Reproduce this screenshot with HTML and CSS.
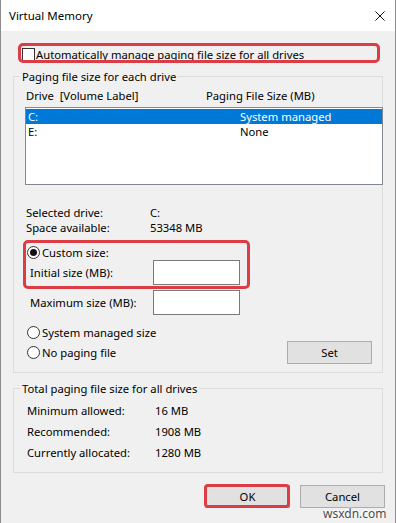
FILE: index.html
```html
<!DOCTYPE html>
<html lang="en">
<head>
<meta charset="utf-8">
<title>Virtual Memory</title>
<link rel="stylesheet" href="styles.css">
</head>
<body>
<div class="window">
  <div class="titlebar">
    <span class="title">Virtual Memory</span>
    <svg class="close" width="10" height="10" viewBox="0 0 10 10" aria-label="Close">
      <path d="M0.5 0.5 L9.5 9.5 M9.5 0.5 L0.5 9.5" stroke="#111" stroke-width="1" fill="none"/>
    </svg>
  </div>
  <div class="content">
    <div class="auto-row">
      <span class="checkbox"></span>
      <span class="auto-label">Automatically manage paging file size for all drives</span>
    </div>

    <fieldset class="group group-drives">
      <legend>Paging file size for each drive</legend>
      <div class="list-head">
        <span class="head-drive">Drive&nbsp; [Volume Label]</span>
        <span>Paging File Size (MB)</span>
      </div>
      <div class="listbox">
        <div class="list-row selected"><span class="row-drive">C:</span><span>System managed</span></div>
        <div class="list-row"><span class="row-drive">E:</span><span>None</span></div>
      </div>
      <div class="info">
        <span>Selected drive:</span><span>C:</span>
        <span>Space available:</span><span>53348 MB</span>
      </div>
      <div class="custom">
        <div class="radio-row">
          <span class="radio checked"></span><span>Custom size:</span>
        </div>
        <div class="size-row">
          <span class="size-label">Initial size (MB):</span><span class="input"></span>
        </div>
      </div>
      <div class="size-row size-max">
        <span class="size-label">Maximum size (MB):</span><span class="input"></span>
      </div>
      <div class="radio-row sysman">
        <span class="radio"></span><span>System managed size</span>
      </div>
      <div class="bottom-row">
        <div class="radio-row">
          <span class="radio"></span><span>No paging file</span>
        </div>
        <button class="btn" type="button">Set</button>
      </div>
    </fieldset>

    <fieldset class="group group-total">
      <legend>Total paging file size for all drives</legend>
      <div class="totals">
        <span>Minimum allowed:</span><span>16 MB</span>
        <span>Recommended:</span><span>1908 MB</span>
        <span>Currently allocated:</span><span>1280 MB</span>
      </div>
    </fieldset>

    <div class="actions">
      <button class="btn btn-ok" type="button">OK</button>
      <button class="btn" type="button">Cancel</button>
    </div>
  </div>
  <span class="watermark">wsxdn.com</span>
</div>
</body>
</html>
```
FILE: styles.css
```css
html, body {
  margin: 0;
  padding: 0;
  background: #f0f0f0;
}

.window {
  position: relative;
  width: 396px;
  height: 523px;
  box-sizing: border-box;
  border-left: 1px solid #8c8c8c;
  border-right: 1px solid #8c8c8c;
  background: #f0f0f0;
  font-family: "Noto Sans", "DejaVu Sans", sans-serif;
  font-size: 11.25px;
  line-height: 15px;
  color: #000;
  overflow: hidden;
}

.titlebar {
  height: 31px;
  background: #fff;
  display: flex;
  align-items: center;
  justify-content: space-between;
  padding: 0 10px 0 8px;
}

.title {
  font-size: 11.5px;
}

.close {
  display: block;
}

.content {
  padding: 0 12px;
}

/* top checkbox row */
.auto-row {
  position: relative;
  display: flex;
  align-items: flex-start;
  height: 14px;
  margin: 15px 6px 0 8px;
}

.auto-row::after {
  content: "";
  position: absolute;
  inset: -3px;
  border: 3px solid #dc3c43;
  border-radius: 5px;
}

.checkbox {
  width: 13px;
  height: 13px;
  box-sizing: border-box;
  border: 1px solid #333;
  background: #fff;
  margin: 2px 1px 0 1px;
  flex: none;
}

.auto-label {
  padding-top: 1px;
}

/* group boxes */
.group {
  margin: 9px 0 0;
  padding: 0 0 8px;
  border: 1px solid #dcdcdc;
  min-width: 0;
}

.group legend {
  margin-left: 6px;
  padding: 0 2px;
  line-height: 15px;
}

.list-head {
  display: flex;
  margin-top: 4px;
  padding-left: 12px;
}

.head-drive {
  width: 180px;
}

.listbox {
  height: 78px;
  box-sizing: border-box;
  margin: 4px -1px 0 11px;
  padding-top: 1px;
  border: 1px solid #828790;
  background: #fff;
}

.list-row {
  display: flex;
  height: 15px;
  padding-left: 2px;
}

.list-row.selected {
  background: #0078d7;
  color: #fff;
}

.row-drive {
  width: 212px;
}

.info {
  display: grid;
  grid-template-columns: 124px auto;
  margin-top: 20px;
  padding-left: 12px;
}

.custom {
  position: relative;
  margin-top: 10px;
}

.custom::after {
  content: "";
  position: absolute;
  top: -5px;
  bottom: -4px;
  left: 9px;
  width: 227px;
  box-sizing: border-box;
  border: 3px solid #dc3c43;
  border-radius: 5px;
}

.radio-row {
  display: flex;
  align-items: center;
  height: 15px;
  padding-left: 13px;
}

.radio {
  width: 13px;
  height: 13px;
  box-sizing: border-box;
  border: 1px solid #333;
  border-radius: 50%;
  background: #fff;
  margin-right: 2px;
  flex: none;
  display: grid;
  place-items: center;
}

.radio.checked::after {
  content: "";
  width: 7px;
  height: 7px;
  border-radius: 50%;
  background: #111;
}

.size-row {
  display: flex;
  align-items: center;
  height: 25px;
  padding-left: 16px;
}

.size-label {
  width: 123px;
}

.size-max {
  margin-top: 5px;
}

.input {
  width: 87px;
  height: 25px;
  box-sizing: border-box;
  border: 1px solid #7a7a7a;
  background: #fff;
}

.sysman {
  margin-top: 10px;
}

.bottom-row {
  display: flex;
  align-items: center;
  justify-content: space-between;
  height: 23px;
  margin-top: 1px;
  padding-right: 10px;
}

.bottom-row .radio-row {
  padding-left: 13px;
}

.btn {
  position: relative;
  width: 85px;
  height: 23px;
  box-sizing: border-box;
  margin: 0;
  padding: 0;
  border: 1px solid #adadad;
  background: #e1e1e1;
  font: inherit;
  color: #000;
  line-height: 15px;
}

.group-total {
  margin-top: 8px;
  padding-bottom: 9px;
}

.totals {
  display: grid;
  grid-template-columns: 128px auto;
  grid-auto-rows: 21px;
  align-items: center;
  margin-top: 4px;
  padding-left: 13px;
}

.actions {
  display: flex;
  justify-content: flex-end;
  gap: 10px;
  margin: 12px -2px 0 0;
}

.btn-ok::after {
  content: "";
  position: absolute;
  top: -2px;
  left: -2px;
  right: -1px;
  bottom: -1px;
  border: 3px solid #dc3c43;
  border-radius: 4px;
}

.watermark {
  position: absolute;
  left: 322px;
  top: 506px;
  font-size: 12px;
  line-height: 15px;
  color: #4a4a4a;
  text-shadow: 0 0 2px #fff, 0 0 2px #fff, 0 0 3px #fff;
}
```
